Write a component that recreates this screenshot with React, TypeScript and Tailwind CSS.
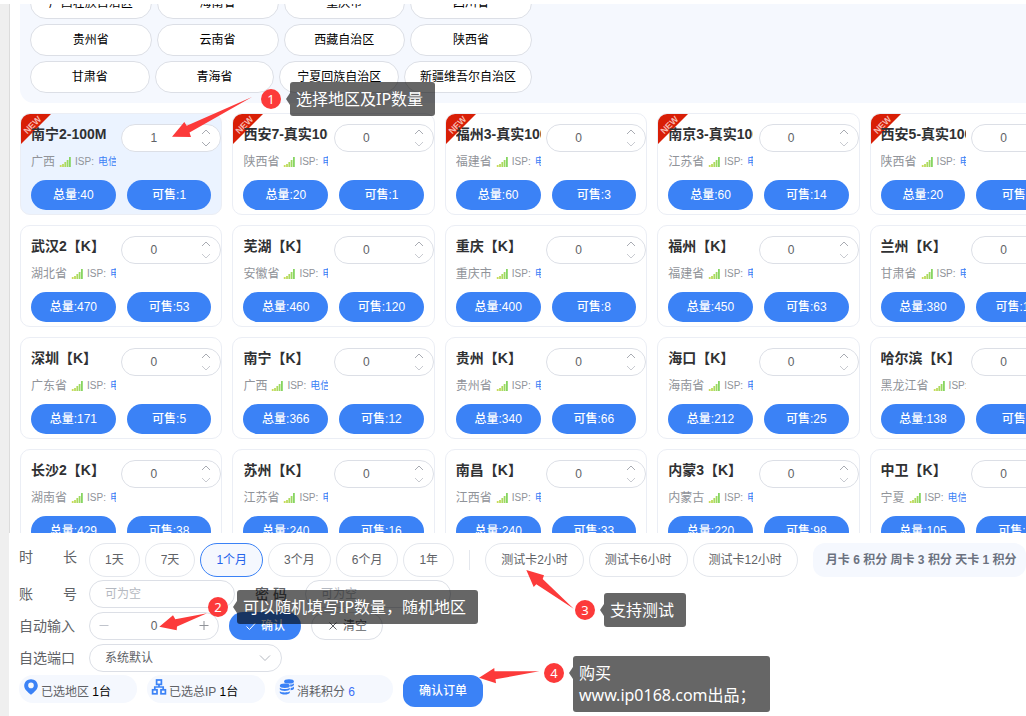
import React from "react";

type Node = {
  name: string;
  region: string;
  isp: string;
  total: number;
  available: number;
  isNew?: boolean;
  picked?: number;
};

const regionRows: string[][] = [
  ["广西壮族自治区", "海南省", "重庆市", "四川省"],
  ["贵州省", "云南省", "西藏自治区", "陕西省"],
];
const lastRegionRow = ["甘肃省", "青海省", "宁夏回族自治区", "新疆维吾尔自治区"];

const nodes: Node[] = [
  { name: "南宁2-100M", region: "广西", isp: "电信", total: 40, available: 1, isNew: true, picked: 1 },
  { name: "西安7-真实100M", region: "陕西省", isp: "电信", total: 20, available: 1, isNew: true },
  { name: "福州3-真实100M", region: "福建省", isp: "电信", total: 60, available: 3, isNew: true },
  { name: "南京3-真实100M", region: "江苏省", isp: "电信", total: 60, available: 14, isNew: true },
  { name: "西安5-真实100M", region: "陕西省", isp: "电信", total: 20, available: 2, isNew: true },
  { name: "武汉2【K】", region: "湖北省", isp: "电信", total: 470, available: 53 },
  { name: "芜湖【K】", region: "安徽省", isp: "电信", total: 460, available: 120 },
  { name: "重庆【K】", region: "重庆市", isp: "电信", total: 400, available: 8 },
  { name: "福州【K】", region: "福建省", isp: "电信", total: 450, available: 63 },
  { name: "兰州【K】", region: "甘肃省", isp: "电信", total: 380, available: 110 },
  { name: "深圳【K】", region: "广东省", isp: "电信", total: 171, available: 5 },
  { name: "南宁【K】", region: "广西", isp: "电信", total: 366, available: 12 },
  { name: "贵州【K】", region: "贵州省", isp: "电信", total: 340, available: 66 },
  { name: "海口【K】", region: "海南省", isp: "电信", total: 212, available: 25 },
  { name: "哈尔滨【K】", region: "黑龙江省", isp: "电信", total: 138, available: 6 },
  { name: "长沙2【K】", region: "湖南省", isp: "电信", total: 429, available: 38 },
  { name: "苏州【K】", region: "江苏省", isp: "电信", total: 240, available: 16 },
  { name: "南昌【K】", region: "江西省", isp: "电信", total: 240, available: 33 },
  { name: "内蒙3【K】", region: "内蒙古", isp: "电信", total: 220, available: 98 },
  { name: "中卫【K】", region: "宁夏", isp: "电信", total: 105, available: 20 },
];

function RegionButton({ label, className = "" }: { label: string; className?: string }) {
  return (
    <button className={`h-8 rounded-2xl border border-[#dcdfe6] bg-white text-xs text-black ${className}`}>
      {label}
    </button>
  );
}

function SignalIcon() {
  return (
    <svg className="h-3 w-3 shrink-0" viewBox="0 0 12 12" aria-hidden="true">
      <rect x="0.8" y="9" width="1.8" height="2" fill="#c9dc5c" />
      <rect x="3.1" y="8" width="1.8" height="3" fill="#bcdb5c" />
      <rect x="5.4" y="6" width="1.8" height="5" fill="#acda5e" />
      <rect x="7.7" y="4" width="1.8" height="7" fill="#9dd960" />
      <rect x="10" y="1" width="1.8" height="10" fill="#86d562" />
    </svg>
  );
}

function NewRibbon() {
  return (
    <svg className="absolute left-0 top-0 h-[30px] w-[30px]" viewBox="0 0 30 30">
      <path d="M0 0H30L0 30Z" fill="#d81e06" />
      <text
        x="11.5"
        y="14"
        fontSize="9"
        fontWeight="bold"
        textAnchor="middle"
        fill="#f7b9b0"
        transform="rotate(-45 11.5 11)"
      >
        NEW
      </text>
    </svg>
  );
}

function NodeCard({ node }: { node: Node }) {
  const picked = node.picked ?? 0;
  return (
    <article
      className={`relative h-[102px] overflow-hidden rounded-[10px] border border-[#ebeef5] ${
        picked ? "bg-[#ebf3ff]" : "bg-white"
      }`}
    >
      {node.isNew && <NewRibbon />}
      <div className="relative flex justify-between pl-[10px] pt-[10px]">
        <div className="w-[85px] overflow-hidden whitespace-nowrap">
          <h3 className="text-sm font-bold text-[#303133]">{node.name}</h3>
          <p className="mt-[10px] flex h-4 items-center gap-1 text-xs text-[#909399]">
            <span className="shrink-0">{node.region}</span>
            <SignalIcon />
            <span className="shrink-0 text-[10px]">ISP:</span>
            <span className="shrink-0 text-[10px] text-[#3b82f6]">{node.isp}</span>
          </p>
        </div>
        <div className="relative h-7 w-[100px] shrink-0">
          <input
            type="text"
            inputMode="numeric"
            aria-label={`${node.name} 数量`}
            defaultValue={picked}
            className="h-7 w-full rounded-[14px] border border-[#dcdfe6] bg-white pr-[35px] text-center text-xs text-[#606266]"
          />
          <button aria-label="增加" className="absolute right-[7px] top-[3px] flex h-2.5 w-4 items-center justify-center">
            <svg className="h-1.5 w-2.5" viewBox="0 0 10 6" fill="none" stroke="#a8abb2">
              <path d="M1 5L5 1L9 5" />
            </svg>
          </button>
          <button aria-label="减少" className="absolute bottom-[3px] right-[7px] flex h-2.5 w-4 items-center justify-center">
            <svg
              className={`h-1.5 w-2.5 ${picked ? "stroke-[#a8abb2]" : "stroke-[#c8cad0]"}`}
              viewBox="0 0 10 6"
              fill="none"
            >
              <path d="M1 1L5 5L9 1" />
            </svg>
          </button>
        </div>
      </div>
      <div className="mt-[10px] flex gap-[11px] px-[10px]">
        <button className="h-[30px] flex-1 rounded-[15px] bg-[#3b82f6] text-xs font-medium text-white">
          总量:{node.total}
        </button>
        <button className="h-[30px] flex-1 rounded-[15px] bg-[#3b82f6] text-xs font-medium text-white">
          可售:{node.available}
        </button>
      </div>
    </article>
  );
}

function Pill({ label, active = false }: { label: string; active?: boolean }) {
  return (
    <button
      className={`h-[34px] shrink-0 rounded-[17px] border px-[15px] text-xs ${
        active ? "border-[#3b82f6] bg-[#f5f8fe] text-[#2563eb]" : "border-[#e4e7ed] bg-white text-[#606266]"
      }`}
    >
      {label}
    </button>
  );
}

function FieldLabel({ htmlFor, children }: { htmlFor?: string; children: React.ReactNode }) {
  return (
    <label htmlFor={htmlFor} className="flex w-[58px] shrink-0 justify-between text-sm leading-7 text-[#606266]">
      {children}
    </label>
  );
}

function Callout({ children, className }: { children: React.ReactNode; className: string }) {
  return (
    <div
      className={`absolute whitespace-nowrap rounded-[3px] bg-black/60 p-[6px] font-['Noto_Sans','Noto_Sans_CJK_SC',sans-serif] text-base leading-[22px] text-white ${className}`}
    >
      <svg className="absolute -left-1 top-[11px] h-3 w-1" viewBox="0 0 4 12">
        <path d="M4 0V12L0 6Z" fill="#000" fillOpacity="0.6" />
      </svg>
      {children}
    </div>
  );
}

function Marker({ n, className }: { n: number; className: string }) {
  return (
    <span
      className={`absolute flex h-5 w-5 items-center justify-center rounded-full bg-[#fc3a3a] font-['Noto_Sans',sans-serif] text-[13px] leading-5 text-white ${className}`}
    >
      {n}
    </span>
  );
}

function Annotations() {
  return (
    <div className="pointer-events-none absolute inset-0">
      <svg className="absolute left-0 top-0 h-[716px] w-[1026px]" viewBox="0 0 1026 716" fill="#fc3a3a">
        <path d="M172 136.7L184.3 122L186.7 125.7L252 97L189.5 132.5L191 137Z" />
        <path d="M159.3 626.7L173 615.3L175.3 619.3L207 613.3L177 626.5L176.7 630.3Z" />
        <path d="M526.3 570L544 575.3L542.7 579L573.7 608.7L536.3 584.3L533.7 587Z" />
        <path d="M479 677.7L494.3 668L494.5 671.3L539.3 671.3L495.5 679.3L496 683.3Z" />
      </svg>
      <Marker n={1} className="left-[261px] top-[89px]" />
      <Callout className="left-[290px] top-[82px] w-[145px]">选择地区及IP数量</Callout>
      <Marker n={2} className="left-[208px] top-[597px]" />
      <Callout className="left-[237px] top-[590px] w-[241px]">可以随机填写IP数量，随机地区</Callout>
      <Marker n={3} className="left-[575px] top-[600px]" />
      <Callout className="left-[604px] top-[593px] w-[82px]">支持测试</Callout>
      <Marker n={4} className="left-[544px] top-[663px]" />
      <Callout className="left-[573px] top-[656px] w-[197px]">
        购买
        <br />
        www.ip0168.com出品；
      </Callout>
    </div>
  );
}

function PinIcon() {
  return (
    <svg className="h-4 w-4" viewBox="0 0 16 16" aria-hidden="true">
      <path
        fill="#3b82f6"
        fillRule="evenodd"
        d="M8 0.3C4.2 0.3 1.2 3.1 1.2 6.8C1.2 10.3 4.6 13 8 15.8C11.4 13 14.8 10.3 14.8 6.8C14.8 3.1 11.8 0.3 8 0.3ZM8 3.6A2.8 2.8 0 1 1 8 9.2A2.8 2.8 0 0 1 8 3.6Z"
      />
    </svg>
  );
}

function NetworkIcon() {
  return (
    <svg className="h-4 w-4" viewBox="0 0 16 16" fill="none" stroke="#3b82f6" strokeWidth="1.7" aria-hidden="true">
      <rect x="5.6" y="1" width="4.8" height="4.4" />
      <rect x="1.6" y="10.8" width="4.4" height="4" />
      <rect x="10" y="10.8" width="4.4" height="4" />
      <path d="M8 5.4V8M3.8 10.8V8H12.2V10.8" />
    </svg>
  );
}

function CoinsIcon() {
  return (
    <svg className="h-4 w-4" viewBox="0 0 16 16" fill="#3b82f6" aria-hidden="true">
      <ellipse cx="10" cy="2.4" rx="4.9" ry="2.2" />
      <path d="M11 5.6C13 5.5 14.6 4.9 15 4.2V5.6C15 6.8 13.4 7.6 11.4 7.8Z" />
      <path d="M11.6 9.1C13.2 8.9 14.6 8.3 15 7.6V9.2C15 10.3 13.6 11.1 11.6 11.3Z" />
      <ellipse cx="5.8" cy="6.8" rx="5" ry="2.2" />
      <path d="M0.8 8.8C1.8 10.4 9.8 10.4 10.8 8.8V10.3C9.8 12.5 1.8 12.5 0.8 10.3Z" />
      <path d="M0.8 12.2C1.8 13.8 9.8 13.8 10.8 12.2V13.7C9.8 16.1 1.8 16.1 0.8 13.7Z" />
    </svg>
  );
}

function Summary({ icon, label, value, valueClass }: { icon: React.ReactNode; label: string; value: string; valueClass: string }) {
  return (
    <div className="flex h-7 w-[118px] shrink-0 items-center gap-0.5 rounded-[14px] bg-[#f5f8fe] pl-1 text-xs text-[#606266]">
      <span className="-mt-1 shrink-0">{icon}</span>
      <span className="whitespace-nowrap pt-1.5">
        {label} <span className={valueClass}>{value}</span>
      </span>
    </div>
  );
}

const inputClass =
  "h-7 w-[146px] rounded-[14px] border border-[#dcdfe6] bg-white px-[15px] text-xs text-[#606266] placeholder:text-[#b4b8c0]";

function OrderPanel() {
  return (
    <section className="shrink-0 bg-white pb-[9px] pl-[10px] pt-[10px]">
      <div className="flex items-start">
        <FieldLabel>
          <span>时</span>
          <span>长</span>
        </FieldLabel>
        <div className="ml-3 flex flex-1 items-center">
          <div className="flex gap-[5px]">
            <Pill label="1天" />
            <Pill label="7天" />
            <Pill label="1个月" active />
            <Pill label="3个月" />
            <Pill label="6个月" />
            <Pill label="1年" />
          </div>
          <span className="mx-[15px] h-5 w-px shrink-0 bg-[#e4e7ed]" />
          <div className="flex gap-[5px]">
            <Pill label="测试卡2小时" />
            <Pill label="测试卡6小时" />
            <Pill label="测试卡12小时" />
          </div>
          <p className="ml-[15px] h-[34px] flex-1 whitespace-nowrap rounded-xl bg-[#f5f8fe] pl-[13px] text-xs font-bold leading-[34px] text-[#6b7280]">
            月卡 6 积分 周卡 3 积分 天卡 1 积分
          </p>
        </div>
      </div>

      <div className="mt-[3px] flex items-start">
        <FieldLabel htmlFor="account">
          <span>账</span>
          <span>号</span>
        </FieldLabel>
        <input id="account" placeholder="可为空" className={`ml-3 ${inputClass}`} />
        <label htmlFor="password" className="ml-5 w-[50px] text-sm font-medium leading-7 text-[#606266]">
          密 码
        </label>
        <input id="password" placeholder="可为空" className={inputClass} />
      </div>

      <div className="mt-1 flex items-start">
        <FieldLabel htmlFor="auto">自动输入</FieldLabel>
        <div className="ml-3 flex h-7 w-[130px] items-center rounded-[14px] border border-[#dcdfe6] px-2 text-[#909399]">
          <button aria-label="减少" className="flex w-3 justify-center text-[#c0c4cc]">
            <svg className="h-3 w-3" viewBox="0 0 12 12" stroke="currentColor">
              <path d="M1.5 5.5H10.5" />
            </svg>
          </button>
          <input
            id="auto"
            inputMode="numeric"
            defaultValue="0"
            className="min-w-0 flex-1 text-center text-xs text-[#606266]"
          />
          <button aria-label="增加" className="flex w-3 justify-center">
            <svg className="h-3 w-3" viewBox="0 0 12 12" stroke="currentColor">
              <path d="M1.5 5.5H10.5M6 1V10" />
            </svg>
          </button>
        </div>
        <button className="ml-[10px] flex h-7 w-[72px] items-center justify-center gap-1 rounded-[14px] bg-[#3b82f6] text-xs font-medium text-white">
          <svg className="h-3 w-3" viewBox="0 0 12 12" fill="none" stroke="currentColor">
            <path d="M1.5 6.5L4.5 9.5L10.5 3" />
          </svg>
          确认
        </button>
        <button className="ml-[10px] flex h-7 w-[72px] items-center justify-center gap-1 rounded-[14px] border border-[#dcdfe6] text-xs text-[#606266]">
          <svg className="h-3 w-3" viewBox="0 0 12 12" fill="none" stroke="currentColor">
            <path d="M2.5 2.5L9.5 9.5M9.5 2.5L2.5 9.5" />
          </svg>
          清空
        </button>
      </div>

      <div className="mt-1 flex items-start">
        <FieldLabel htmlFor="port">自选端口</FieldLabel>
        <div className="relative ml-3 w-[193px]">
          <select
            id="port"
            className="h-7 w-full appearance-none rounded-[14px] border border-[#dcdfe6] bg-white px-[15px] text-xs text-[#606266]"
          >
            <option>系统默认</option>
          </select>
          <svg
            className="pointer-events-none absolute right-[11px] top-2 h-3 w-3"
            viewBox="0 0 12 12"
            fill="none"
            stroke="#b4b8c0"
          >
            <path d="M1 3.5L6 8.5L11 3.5" />
          </svg>
        </div>
      </div>

      <div className="mt-[3px] flex items-start gap-[10px]">
        <Summary icon={<PinIcon />} label="已选地区" value="1台" valueClass="text-black" />
        <Summary icon={<NetworkIcon />} label="已选总IP" value="1台" valueClass="text-black" />
        <Summary icon={<CoinsIcon />} label="消耗积分" value="6" valueClass="text-[#3b6ff6]" />
        <button className="h-8 w-20 rounded-xl bg-[#3b82f6] text-xs font-medium text-white">确认订单</button>
      </div>
    </section>
  );
}

export default function App() {
  return (
    <div className="relative flex h-screen overflow-hidden bg-white pt-1 font-['Liberation_Sans','Noto_Sans_CJK_SC',sans-serif]">
      <aside className="w-[9px] shrink-0 bg-[#efefef]" />
      <main className="flex min-w-0 flex-1 flex-col">
        <div className="min-h-0 flex-1 overflow-hidden border-l border-[#dcdcdc] pl-[10px]">
          <section className="flex flex-col gap-[5px] overflow-hidden rounded-bl-[14px] bg-[#f5f8fe] pb-[10px] pl-[10px]">
            <div className="-mt-[17px] grid w-[502px] grid-cols-4 gap-[5px]">
              {regionRows.flat().map((r) => (
                <RegionButton key={r} label={r} />
              ))}
            </div>
            <div className="flex w-[502px] gap-[5px]">
              {lastRegionRow.map((r, i) => (
                <RegionButton key={r} label={r} className={i === 3 ? "w-32 shrink-0" : "flex-1"} />
              ))}
            </div>
          </section>
          <section className="mt-[10px] grid w-[1052px] grid-cols-5 gap-[10px]">
            {nodes.map((n) => (
              <NodeCard key={n.name} node={n} />
            ))}
          </section>
        </div>
        <OrderPanel />
      </main>
      <Annotations />
    </div>
  );
}
